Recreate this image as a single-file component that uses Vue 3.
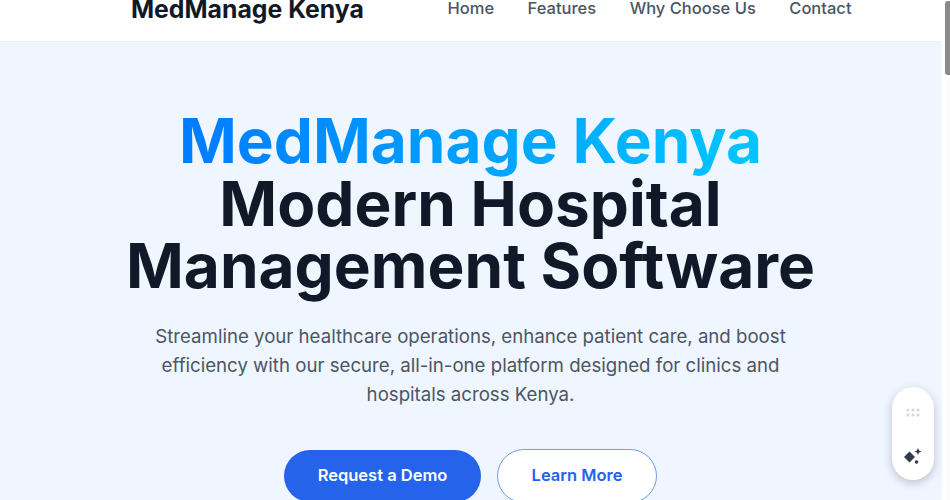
<template>
  <div class="viewport">
    <div class="page">
      <header class="site-header">
        <div class="header-inner">
          <div class="brand">MedManage Kenya</div>
          <nav class="nav">
            <a v-for="item in navItems" :key="item" class="nav-item">{{ item }}</a>
          </nav>
        </div>
      </header>
      <section class="hero">
        <h1 class="hero-title">
          <span class="gradient">MedManage Kenya</span><br>
          Modern Hospital<br>
          Management Software
        </h1>
        <p class="hero-text">
          Streamline your healthcare operations, enhance patient care, and boost
          efficiency with our secure, all-in-one platform designed for clinics and
          hospitals across Kenya.
        </p>
        <div class="actions">
          <a class="btn btn-primary">Request a Demo</a>
          <a class="btn btn-outline">Learn More</a>
        </div>
      </section>
    </div>

    <div class="scrollbar"><div class="thumb"></div></div>

    <div class="widget">
      <svg class="grip" viewBox="0 0 14 9" width="14" height="9">
        <g fill="#d5d8dd">
          <circle v-for="d in dots" :key="d[0] + '-' + d[1]" :cx="d[0]" :cy="d[1]" r="1.6" />
        </g>
      </svg>
      <svg class="spark" viewBox="0 0 18 18" width="18" height="18">
        <g fill="#333b4a">
          <path d="M5.5 4.5 L11 10 L5.5 15.5 L0 10 Z" />
          <path d="M14 1 L15.1 3.4 L17.5 4.5 L15.1 5.6 L14 8 L12.9 5.6 L10.5 4.5 L12.9 3.4 Z" />
          <circle cx="12.5" cy="15" r="1.8" />
        </g>
      </svg>
    </div>
  </div>
</template>

<script setup>
const navItems = ['Home', 'Features', 'Why Choose Us', 'Contact']
const dots = [[2, 2], [7, 2], [12, 2], [2, 7], [7, 7], [12, 7]]
</script>

<style>
html, body {
  margin: 0;
  overflow: hidden;
}
</style>

<style scoped>
.viewport {
  position: relative;
  width: 950px;
  height: 500px;
  overflow: hidden;
  background: #fff;
  font-family: Inter, "Liberation Sans", sans-serif;
}

.page {
  width: 942px;
  margin-top: -24px;
}

.site-header {
  height: 65px;
  background: #fff;
  border-bottom: 1px solid #eceef1;
  box-shadow: 0 1px 2px rgba(0, 0, 0, 0.03);
}

.header-inner {
  height: 66px;
  padding: 0 90.5px 0 131px;
  display: flex;
  align-items: center;
  justify-content: space-between;
}

.brand {
  font-size: 24.8px;
  font-weight: 700;
  color: #111827;
}

.nav {
  display: flex;
  gap: 33.5px;
  margin-top: -2px;
}

.nav-item {
  font-size: 16.5px;
  font-weight: 500;
  color: #4b5563;
}

.hero {
  background: #eff6ff;
  height: 470px;
  padding: 68px 1px 0 0;
  box-sizing: border-box;
  text-align: center;
}

.hero-title {
  margin: 0;
  font-size: 62.1px;
  line-height: 62.5px;
  font-weight: 700;
  color: #111827;
}

.gradient {
  background: linear-gradient(90deg, #007bff, #00c6ff);
  -webkit-background-clip: text;
  background-clip: text;
  color: transparent;
}

.hero-text {
  width: 696px;
  margin: 24px auto 0;
  font-size: 18.65px;
  line-height: 29px;
  color: #4b5563;
}

.actions {
  margin-top: 40px;
  display: flex;
  justify-content: center;
  align-items: center;
  gap: 16px;
}

.btn {
  box-sizing: border-box;
  display: flex;
  align-items: center;
  justify-content: center;
  padding-bottom: 2px;
  border-radius: 27px;
  font-size: 16.5px;
  font-weight: 600;
}

.btn-primary {
  width: 197px;
  height: 52px;
  background: #2563eb;
  color: #fff;
}

.btn-outline {
  width: 160px;
  height: 54px;
  background: #fff;
  color: #2563eb;
  border: 1px solid #6f9bf0;
}

.scrollbar {
  position: absolute;
  top: 0;
  right: 0;
  width: 5px;
  height: 500px;
  background: #fdfdfd;
}

.thumb {
  height: 74px;
  margin-top: 1px;
  background: #8a8a8a;
  border-radius: 3px 0 0 3px;
}

.widget {
  position: absolute;
  left: 892px;
  top: 387px;
  width: 42px;
  height: 93px;
  border-radius: 21px;
  background: #fff;
  box-shadow: 0 3px 10px rgba(0, 0, 0, 0.22);
  display: flex;
  flex-direction: column;
  align-items: center;
  justify-content: space-between;
  padding: 21px 0 15px;
  box-sizing: border-box;
}
</style>
